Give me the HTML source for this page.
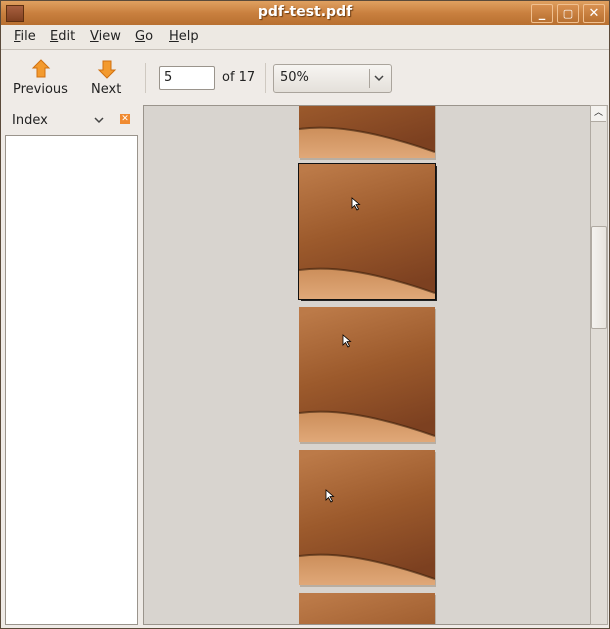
<!DOCTYPE html>
<html><head><style>
html,body{margin:0;width:610px;height:629px;overflow:hidden}
body{font-family:"DejaVu Sans","Liberation Sans",sans-serif;font-size:13px;color:#222;background:#efebe7;position:relative}
.win{position:absolute;left:0;top:0;width:608px;height:627px;border:1px solid #5a4a3a;background:#efebe7;overflow:hidden}
.title{position:absolute;left:0;top:0;width:608px;height:24px;background:linear-gradient(#e0a060,#c9803f 50%,#b87030);}
.title .t{position:absolute;left:0;right:0;top:3px;text-align:center;color:#fff;font-weight:bold;font-size:14px;text-shadow:1px 1px 1px #6a3a10}
.ico{position:absolute;left:5px;top:4px;width:16px;height:15px;background:linear-gradient(#a86040,#804020);border:1px solid #603010}
.wb{position:absolute;top:3px;width:20px;height:17px;border:1px solid #f0c090;border-radius:2px;background:linear-gradient(#d89050,#b87030);color:#fff;text-align:center;font-weight:bold;font-size:13px;line-height:17px}
.menu{position:absolute;top:24px;left:0;width:608px;height:24px;background:#ede9e3;border-bottom:1px solid #c8c2ba}
.menu span{position:absolute;top:4px}
u{text-decoration:underline}
.sep{position:absolute;top:62px;width:1px;height:30px;background:#cfc9c1}
.pg{position:absolute;left:155px;width:136px;height:135px;box-shadow:1px 2px 0 #b8aea2}
.cur{position:absolute}
</style></head><body>
<div class="win">
<div class="title"><div class="ico"></div><div class="t">pdf-test.pdf</div>
<div class="wb" style="left:530px">_</div><div class="wb" style="left:556px;font-size:11px">▢</div><div class="wb" style="left:582px">✕</div></div>
<div class="menu"><span style="left:13px"><u>F</u>ile</span><span style="left:49px"><u>E</u>dit</span><span style="left:89px"><u>V</u>iew</span><span style="left:134px"><u>G</u>o</span><span style="left:168px"><u>H</u>elp</span></div>
<svg style="position:absolute;left:30px;top:57px" width="20" height="22"><path d="M10 2 L18 10 H14 V19 H6 V10 H2 Z" fill="#f39a2e" stroke="#d07010"/></svg>
<svg style="position:absolute;left:96px;top:57px" width="20" height="22"><path d="M10 20 L18 12 H14 V3 H6 V12 H2 Z" fill="#f39a2e" stroke="#d07010"/></svg>
<div style="position:absolute;left:12px;top:81px">Previous</div>
<div style="position:absolute;left:90px;top:81px">Next</div>
<div class="sep" style="left:144px"></div>
<div style="position:absolute;left:158px;top:65px;width:54px;height:22px;background:#fff;border:1px solid #9a948c;border-radius:2px"><span style="position:absolute;left:4px;top:3px">5</span></div>
<div style="position:absolute;left:221px;top:69px">of 17</div>
<div class="sep" style="left:264px"></div>
<div style="position:absolute;left:272px;top:63px;width:117px;height:27px;border:1px solid #aaa49c;border-radius:3px;background:linear-gradient(#f7f5f2,#e4e0da)"><span style="position:absolute;left:6px;top:5px">50%</span><div style="position:absolute;left:95px;top:4px;width:1px;height:19px;background:#aaa49c"></div><svg style="position:absolute;left:99px;top:8px" width="12" height="10"><path d="M2 3 L6 7 L10 3" stroke="#444" stroke-width="1.5" fill="none"/></svg></div>
<div style="position:absolute;left:11px;top:112px">Index</div>
<svg style="position:absolute;left:92px;top:114px" width="12" height="10"><path d="M2 3 L6 7 L10 3" stroke="#444" stroke-width="1.5" fill="none"/></svg>
<div style="position:absolute;left:119px;top:113px;width:10px;height:10px;background:#f08a30;color:#fff;font-size:9px;line-height:10px;text-align:center;font-weight:bold">✕</div>
<div style="position:absolute;left:4px;top:134px;width:131px;height:488px;background:#fff;border:1px solid #9a948c"></div>
<div style="position:absolute;left:142px;top:104px;width:446px;height:518px;background:#d8d4cf;border:1px solid #9a948c"></div>
<svg width="0" height="0" style="position:absolute"><defs>
<linearGradient id="g" x1="0.2" y1="0" x2="0.5" y2="1"><stop offset="0" stop-color="#bc7a48"/><stop offset="0.5" stop-color="#9c5a2c"/><stop offset="1" stop-color="#7c4020"/></linearGradient>
<linearGradient id="s" x1="0" y1="0" x2="0" y2="1"><stop offset="0" stop-color="#cc8e5a"/><stop offset="1" stop-color="#e0a878"/></linearGradient>
<symbol id="p" viewBox="0 0 136 135"><rect width="136" height="135" fill="url(#g)"/><path d="M0 106 C30 102 70 106 136 129 V135 H0Z" fill="url(#s)"/><path d="M0 106 C30 102 70 106 136 129" stroke="#3a1e0a" stroke-width="2" fill="none" opacity=".6"/></symbol>
</defs></svg>
<div style="position:absolute;left:143px;top:105px;width:446px;height:518px;overflow:hidden">
<svg class="pg" style="top:-83px" viewBox="0 0 136 135"><use href="#p"/></svg>
<svg class="pg" style="top:58px;outline:1px solid #111;box-shadow:2px 2px 0 #222" viewBox="0 0 136 135"><use href="#p"/></svg>
<svg class="pg" style="top:201px" viewBox="0 0 136 135"><use href="#p"/></svg>
<svg class="pg" style="top:344px" viewBox="0 0 136 135"><use href="#p"/></svg>
<svg class="pg" style="top:487px" viewBox="0 0 136 135"><use href="#p"/></svg>
<svg class="cur" style="left:207px;top:91px" width="10" height="14"><path d="M1 1 V11 L3.5 8.5 L6 13 L7.5 12 L5 7.5 H8.5 Z" fill="#fff" stroke="#000" stroke-width=".8"/></svg>
<svg class="cur" style="left:198px;top:228px" width="10" height="14"><path d="M1 1 V11 L3.5 8.5 L6 13 L7.5 12 L5 7.5 H8.5 Z" fill="#fff" stroke="#000" stroke-width=".8"/></svg>
<svg class="cur" style="left:181px;top:383px" width="10" height="14"><path d="M1 1 V11 L3.5 8.5 L6 13 L7.5 12 L5 7.5 H8.5 Z" fill="#fff" stroke="#000" stroke-width=".8"/></svg>
</div>
<div style="position:absolute;left:589px;top:104px;width:16px;height:518px;background:#e0dcd6;border:1px solid #b0aaa2"></div>
<div style="position:absolute;left:590px;top:105px;width:15px;height:15px;background:#f4f2ef;border-bottom:1px solid #b0aaa2;text-align:center;font-size:9px;line-height:15px">︿</div>
<div style="position:absolute;left:590px;top:225px;width:14px;height:101px;background:linear-gradient(90deg,#f4f2ef,#e8e4de);border:1px solid #b0aaa2;border-radius:2px"></div>
</div>
</body></html>
